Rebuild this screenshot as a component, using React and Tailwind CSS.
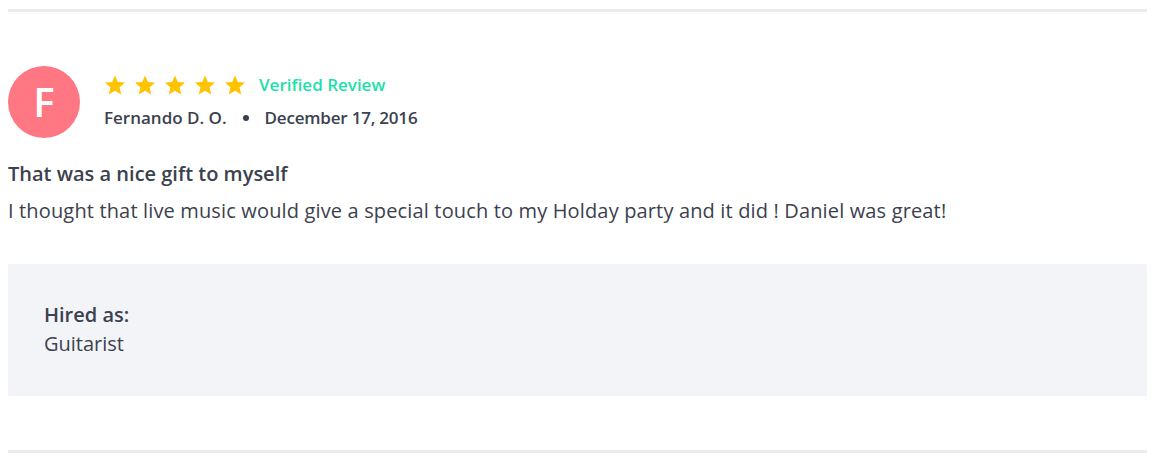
const Star = () => (
  <svg viewBox="0 0 24 24" className="w-[22px] h-[22px]" fill="#ffc300">
    <path d="M12 1.5l3.1 7.2 7.8.7-5.9 5.2 1.8 7.7L12 18.3l-6.8 4 1.8-7.7-5.9-5.2 7.8-.7z" />
  </svg>
)

export default function App() {
  return (
    <div className="bg-white w-[1155px] h-[462px] px-2 pt-[9px]" style={{ fontFamily: '"Open Sans", "Noto Sans", sans-serif' }}>
      <div className="h-[3px] bg-[#ebebeb]" />
      <div className="flex items-start gap-6 mt-[54px]">
        <div className="w-[72px] h-[72px] rounded-full bg-[#ff7783] flex items-center justify-center text-white text-[40px] font-semibold leading-none">
          F
        </div>
        <div className="flex flex-col gap-[13px] mt-[8px] text-[#3b414e]">
          <div className="flex items-center h-[22px]">
            <div className="flex items-center gap-2">
              <Star /><Star /><Star /><Star /><Star />
            </div>
            <span className="text-[#1ee0a8] text-[17px] font-semibold ml-[13px]">Verified Review</span>
          </div>
          <div className="flex items-center text-[17px] font-semibold leading-[18px]">
            <span>Fernando D. O.</span>
            <span className="w-[6px] h-[6px] rounded-full bg-[#3b414e] mx-[16px]" />
            <span className="tracking-[-0.2px]">December 17, 2016</span>
          </div>
        </div>
      </div>
      <div className="mt-[17px] text-[#3b414e] text-[20px] leading-[37px]">
        <div className="font-semibold">That was a nice gift to myself</div>
        <div className="tracking-[0.15px]">I thought that live music would give a special touch to my Holday party and it did ! Daniel was great!</div>
      </div>
      <div className="mt-[35px] h-[132px] bg-[#f3f4f8] px-9 pt-[36px] text-[#3b414e] text-[20px] leading-[29px]">
        <div className="font-semibold">Hired as:</div>
        <div>Guitarist</div>
      </div>
      <div className="mt-[54px] h-[3px] bg-[#ebebeb]" />
    </div>
  )
}
